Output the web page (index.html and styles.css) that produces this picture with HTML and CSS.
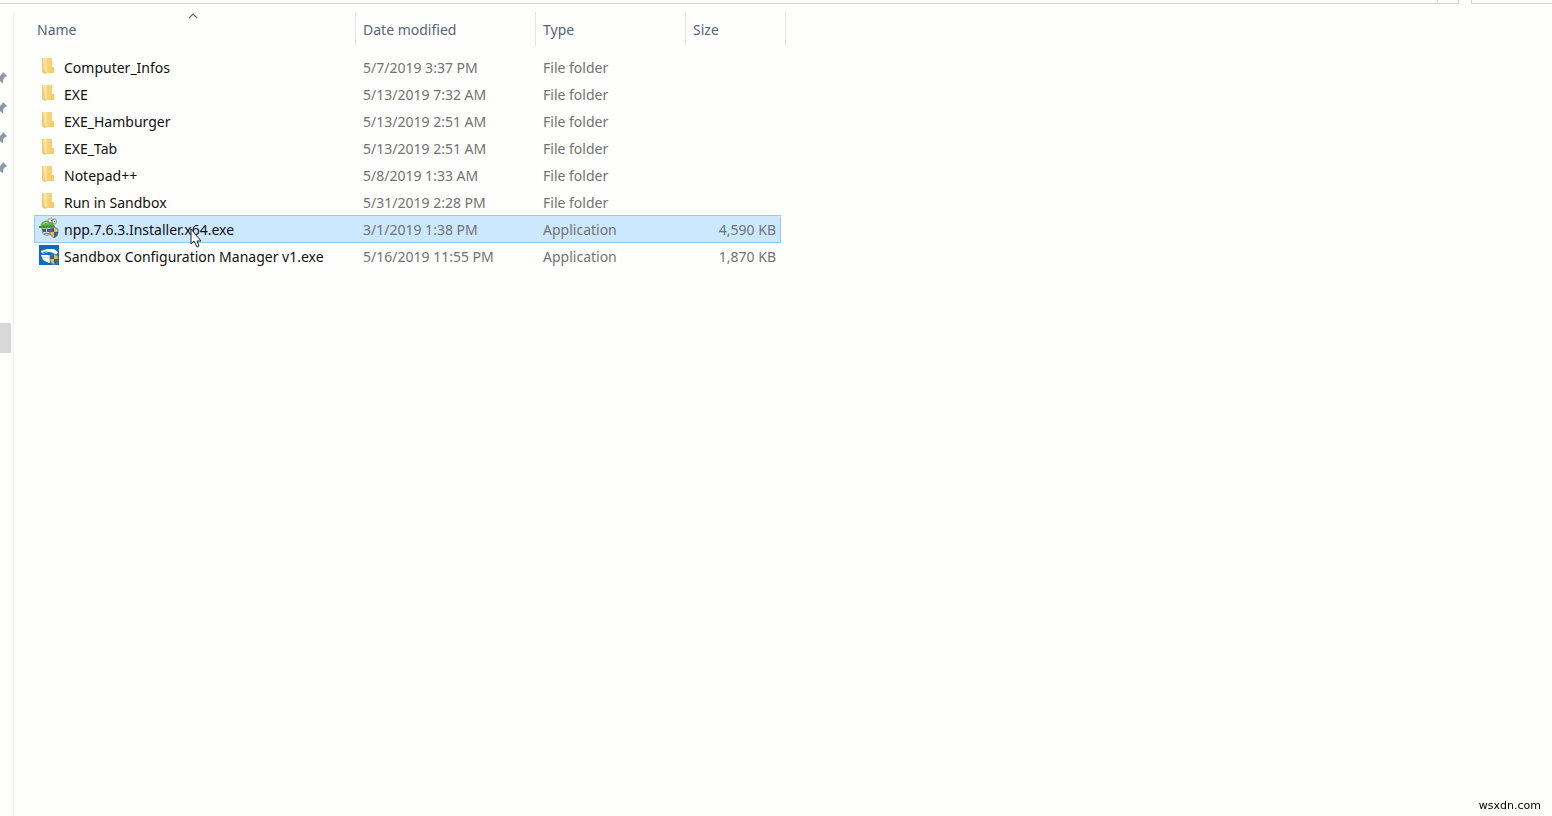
FILE: index.html
```
<!DOCTYPE html>
<html lang="en">
<head>
    <meta charset="UTF-8">
    <meta name="viewport" content="width=device-width, initial-scale=1.0">
    <title>File Explorer</title>
    <link rel="stylesheet" href="styles.css">
</head>
<body>
    <!-- shared icons -->
    <svg class="defs" aria-hidden="true">
        <symbol id="folder" viewBox="0 0 20 20">
            <path d="M3 2h7v14l-4 2-3-2z" fill="#f3d27c"/>
            <path d="M4 2h8v14H6z" fill="#fbe29b"/>
            <path d="M8 2h5v14H8z" fill="#f6d378"/>
            <path d="M11 11h4v6h-7l3-2z" fill="#f3cd6d"/>
            <path d="M3 2h1v12l3 3-1 1-3-2z" fill="#edc976"/>
        </symbol>
        <symbol id="pin" viewBox="0 0 8 14">
            <path d="M3 1l4 4-1 1-1 0-2 3 0 3-1 0-2-2-3 3v-4l2-2-2-2 3 0 2-2z" fill="#8e99a2"/>
        </symbol>
        <symbol id="shield" viewBox="0 0 10 11">
            <path d="M5 0l4 2v4q0 3-4 5q-4-2-4-5V2z" fill="#f0b64a"/>
            <path d="M5 0v5H1V2zM5 5h4v1q0 3-4 5z" fill="#2f659b"/>
            <path d="M5 0l4 2v4q0 3-4 5q-4-2-4-5V2z" fill="none" stroke="#66757e" stroke-width=".8"/>
        </symbol>
    </svg>

    <div class="toolbar">
        <div class="address"></div>
        <div class="refresh"></div>
        <div class="search"></div>
    </div>

    <div class="explorer">
        <nav class="sidebar">
            <div class="pinned"><svg><use href="#pin"/></svg></div>
            <div class="pinned"><svg><use href="#pin"/></svg></div>
            <div class="pinned"><svg><use href="#pin"/></svg></div>
            <div class="pinned"><svg><use href="#pin"/></svg></div>
            <div class="current"></div>
        </nav>

        <main class="content">
            <table class="files">
                <colgroup>
                    <col class="col-edge">
                    <col class="col-name">
                    <col class="col-date">
                    <col class="col-type">
                    <col class="col-size">
                    <col class="col-end">
                </colgroup>
                <thead>
                    <tr>
                        <th colspan="2" aria-sort="ascending">
                            <svg class="sort" viewBox="0 0 10 6"><path d="M1 5l4-4 4 4" fill="none" stroke="#666" stroke-width="1.1"/></svg>
                            <button type="button">Name</button>
                        </th>
                        <th><button type="button">Date modified</button></th>
                        <th><button type="button">Type</button></th>
                        <th colspan="2"><button type="button">Size</button></th>
                    </tr>
                </thead>
                <tbody>
                    <tr>
                        <td></td>
                        <td class="name"><div><svg><use href="#folder"/></svg>Computer_Infos</div></td>
                        <td>5/7/2019 3:37 PM</td>
                        <td>File folder</td>
                        <td class="size"></td>
                    </tr>
                    <tr>
                        <td></td>
                        <td class="name"><div><svg><use href="#folder"/></svg>EXE</div></td>
                        <td>5/13/2019 7:32 AM</td>
                        <td>File folder</td>
                        <td class="size"></td>
                    </tr>
                    <tr>
                        <td></td>
                        <td class="name"><div><svg><use href="#folder"/></svg>EXE_Hamburger</div></td>
                        <td>5/13/2019 2:51 AM</td>
                        <td>File folder</td>
                        <td class="size"></td>
                    </tr>
                    <tr>
                        <td></td>
                        <td class="name"><div><svg><use href="#folder"/></svg>EXE_Tab</div></td>
                        <td>5/13/2019 2:51 AM</td>
                        <td>File folder</td>
                        <td class="size"></td>
                    </tr>
                    <tr>
                        <td></td>
                        <td class="name"><div><svg><use href="#folder"/></svg>Notepad++</div></td>
                        <td>5/8/2019 1:33 AM</td>
                        <td>File folder</td>
                        <td class="size"></td>
                    </tr>
                    <tr>
                        <td></td>
                        <td class="name"><div><svg><use href="#folder"/></svg>Run in Sandbox</div></td>
                        <td>5/31/2019 2:28 PM</td>
                        <td>File folder</td>
                        <td class="size"></td>
                    </tr>
                    <tr class="selected">
                        <td></td>
                        <td class="name">
                            <div>
                                <svg viewBox="0 0 20 20">
                                    <path d="M3 10h9v6q-4 3-8 0z" fill="#d3dfe0" stroke="#74858b" stroke-width=".8"/>
                                    <path d="M3 11h4v3H4zM8 11h3v3H8z" fill="#4d5b60"/>
                                    <path d="M5 16l2-1 2 1 2-1" fill="none" stroke="#4d5b60" stroke-width=".8"/>
                                    <path d="M2 9q0-6 6-6q6 0 7 6z" fill="#5dbb45" stroke="#4b8b44" stroke-width=".8"/>
                                    <path d="M0 8l15-1 1 2-11 1-5 0z" fill="#469439"/>
                                    <path d="M4 6q3-3 5-1" fill="none" stroke="#a5df88"/>
                                    <ellipse cx="11.500" cy="2.500" rx="2.500" ry="2" fill="#f3f5ec" stroke="#6d776a" stroke-width=".8"/>
                                    <ellipse cx="15.500" cy="3.500" rx="2" ry="2.500" fill="#f3f5ec" stroke="#6d776a" stroke-width=".8"/>
                                    <path d="M12 2h1v1h-1zM15 3h1v1h-1z" fill="#333"/>
                                    <use href="#shield" x="10" y="9" width="10" height="11"/>
                                </svg>
                                npp.7.6.3.Installer.x64.exe
                                <svg class="cursor" viewBox="0 0 12 20"><path d="M1 1v15l3-3 3 6 2-1-2-5h4z" fill="#fff" stroke="#222"/></svg>
                            </div>
                        </td>
                        <td>3/1/2019 1:38 PM</td>
                        <td>Application</td>
                        <td class="size">4,590 KB</td>
                    </tr>
                    <tr>
                        <td></td>
                        <td class="name">
                            <div>
                                <svg viewBox="0 0 20 20">
                                    <path d="M0 0h20v20H0z" fill="#0c6cbd"/>
                                    <path d="M2 6l6-2 7 0 4 3-2 3-5-2-5 0-4 1z" fill="#fff"/>
                                    <path d="M2 10l2 5 6 3 4-3 0-4-6-1z" fill="#fff"/>
                                    <path d="M1 9l6-2 6 1 4 2" fill="none" stroke="#0c6cbd"/>
                                    <path d="M4 12l5 1 3-1" fill="none" stroke="#b5d2ea" stroke-width=".8"/>
                                    <use href="#shield" x="10" y="9" width="10" height="11"/>
                                </svg>
                                Sandbox Configuration Manager v1.exe
                            </div>
                        </td>
                        <td>5/16/2019 11:55 PM</td>
                        <td>Application</td>
                        <td class="size">1,870 KB</td>
                    </tr>
                </tbody>
            </table>
        </main>
    </div>

    <div class="watermark">wsxdn.com</div>
</body>
</html>
```
FILE: styles.css
```
* {
    margin: 0;
    padding: 0;
    box-sizing: border-box;
}

body {
    display: flex;
    flex-direction: column;
    min-height: 100vh;
    background: #fefefc;
    color: #111;
    font-family: "Segoe UI", "Noto Sans", "Open Sans", sans-serif;
    font-size: 14px;
    line-height: 20px;
}

.defs {
    position: absolute;
    width: 0;
    height: 0;
}

/* bottom edge of the address bar and search box */
.toolbar {
    display: flex;
    height: 4px;
}

.toolbar div {
    border-bottom: 1px solid #d5d5d5;
}

.address {
    flex: 1;
}

.refresh {
    width: 22px;
    border-left: 1px solid #d5d5d5;
    border-right: 1px solid #d5d5d5;
}

.search {
    width: 81px;
    margin-left: 12px;
    border-left: 1px solid #d5d5d5;
}

.explorer {
    display: flex;
    flex: 1;
}

/* navigation pane */
.sidebar {
    width: 14px;
    margin-top: 8px;
    padding-top: 51px;
    border-right: 1px solid #f2f2f2;
}

.pinned {
    display: flex;
    align-items: center;
    height: 30px;
}

.pinned svg {
    width: 8px;
    height: 14px;
}

.current {
    width: 11px;
    height: 30px;
    margin-top: 140px;
    background: #d8d8d8;
}

/* file list */
.content {
    flex: 1;
    padding: 8px 16px;
}

.files {
    width: 756px;
    table-layout: fixed;
    border-collapse: separate;
    border-spacing: 0;
}

.col-edge { width: 4px; }
.col-name { width: 322px; }
.col-date { width: 180px; }
.col-type { width: 150px; }
.col-size { width: 95px; }
.col-end { width: 5px; }

th {
    position: relative;
    height: 34px;
    padding-top: 2px;
    border-right: 1px solid #e5e5e5;
    text-align: left;
}

th button {
    display: block;
    width: 100%;
    padding-left: 7px;
    border: none;
    background: none;
    color: #56657a;
    font: inherit;
    font-weight: 400;
    text-align: left;
}

.sort {
    position: absolute;
    top: 1px;
    left: calc(50% - 5px);
    width: 10px;
    height: 6px;
}

/* gap between the header and the first row */
tbody::before {
    content: "";
    display: table-row;
    height: 8px;
}

td {
    height: 27px;
    padding-left: 7px;
    border: solid transparent;
    border-width: 1px 0;
    color: #737373;
    white-space: nowrap;
}

td:first-child {
    padding: 0;
}

td.name {
    padding-left: 5px;
    color: #111;
}

.name div {
    position: relative;
    display: flex;
    align-items: center;
    gap: 5px;
}

.name svg {
    width: 20px;
    height: 20px;
    margin-bottom: 3px;
}

td.size {
    padding-right: 5px;
    text-align: right;
}

.selected td:not(:first-child) {
    border-color: #cce8ff #99c9ea #99c9ea;
    background: #cce8ff;
    box-shadow: 0 -1px #99c9ea;
}

.selected .name {
    padding-left: 4px;
    border-left-width: 1px;
}

.selected .size {
    padding-right: 4px;
    border-right-width: 1px;
}

.name .cursor {
    position: absolute;
    top: 10px;
    left: 151px;
    width: 12px;
    height: 20px;
    margin: 0;
    z-index: 1;
}

.watermark {
    position: fixed;
    right: 11px;
    bottom: 0;
    color: #000;
    font-family: Tahoma, "DejaVu Sans", sans-serif;
    font-size: 11px;
}
```
